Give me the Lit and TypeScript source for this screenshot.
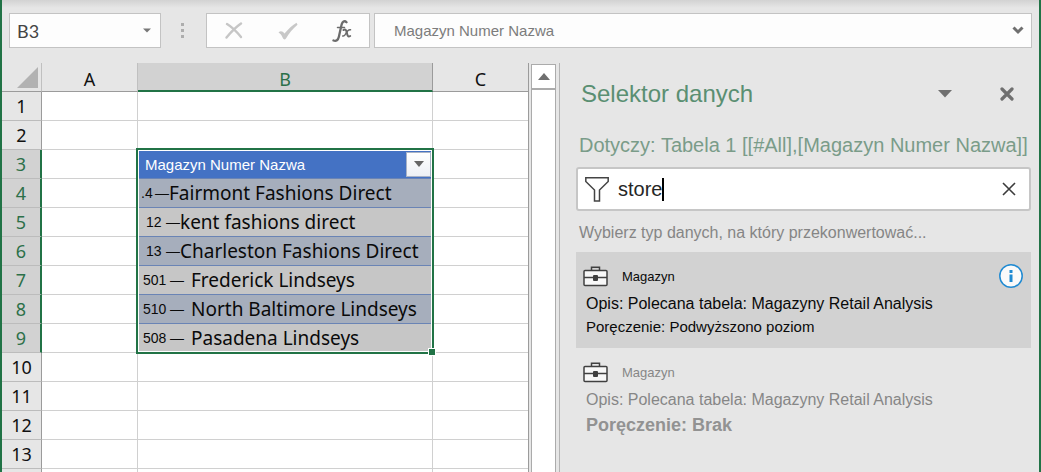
import { LitElement, html, css, svg, nothing } from "lit";
import { customElement, state } from "lit/decorators.js";

interface Store {
  num: string;
  size: string;
  name: string;
}

const STORES: Record<number, Store> = {
  4: { num: ".4", size: "short", name: "Fairmont Fashions Direct" },
  5: { num: "12", size: "mid", name: "kent fashions direct" },
  6: { num: "13", size: "mid", name: "Charleston Fashions Direct" },
  7: { num: "501", size: "long", name: "Frederick Lindseys" },
  8: { num: "510", size: "long", name: "North Baltimore Lindseys" },
  9: { num: "508", size: "long", name: "Pasadena Lindseys" },
};

const ROWS = Array.from({ length: 13 }, (_, i) => i + 1);

@customElement("formula-bar")
export class FormulaBar extends LitElement {
  static styles = css`
    :host {
      display: flex;
      padding: 13px 7px 15px;
      background: linear-gradient(#d2d2d2, #e6e6e6 8px);
      font-family: "Liberation Sans", Arial, sans-serif;
    }
    .box {
      display: flex;
      align-items: center;
      box-sizing: border-box;
      height: 35px;
      background: #fdfdfd;
      border: 1px solid #c3c3c3;
    }
    .name {
      width: 152px;
    }
    .tools {
      width: 164px;
      justify-content: space-between;
      padding: 0 14px;
      margin-right: 4px;
    }
    .formula {
      flex: 1;
      min-width: 0;
    }
    input {
      flex: 1;
      min-width: 0;
      border: 0;
      outline: 0;
      padding: 0;
      background: none;
    }
    .name input {
      padding-left: 7px;
      font: 18px "Lato", sans-serif;
      color: #444;
    }
    .formula input {
      padding-left: 19px;
      font: 15px "Liberation Sans", Arial, sans-serif;
      color: #7c7c7c;
    }
    button {
      display: flex;
      align-items: center;
      justify-content: center;
      border: 0;
      padding: 0;
      background: none;
    }
    .drop {
      width: 26px;
      height: 32px;
    }
    .tool {
      width: 26px;
      height: 32px;
    }
    .dots {
      display: flex;
      flex-direction: column;
      justify-content: center;
      gap: 3px;
      width: 3px;
      margin: 0 22px 0 20px;
    }
    .dots i {
      height: 3px;
      background: #adadad;
    }
    svg {
      display: block;
    }
  `;

  render() {
    return html`
      <div class="box name">
        <input aria-label="Pole nazwy" value="B3" />
        <button class="drop" aria-label="Lista nazw">
          <svg width="8" height="5"><path d="M0 .5h8L4 4.5z" fill="#777" /></svg>
        </button>
      </div>
      <div class="dots"><i></i><i></i><i></i></div>
      <div class="box tools">
        <button class="tool" aria-label="Anuluj">
          <svg width="18" height="17" viewBox="0 0 18 17" fill="none" stroke="#c6c6c6" stroke-linecap="round">
            <path d="M2 2C7 5 12 10 16 15" stroke-width="2.4" />
            <path d="M16 1.500C11 5 6 10 1.500 15.500" stroke-width="2.400" />
          </svg>
        </button>
        <button class="tool" aria-label="Wpisz">
          <svg width="20" height="18" viewBox="0 0 20 18">
            <path d="M.5 10.500c2-2.200 4-1.500 6 1C10 7.500 14 3.500 18.500.8l1 2C14.500 7 11 11.500 8 16.500 6.800 18 5.500 17.500 4.800 16 3.500 13 2.500 11.800.5 10.500z" fill="#c8c8c8" />
          </svg>
        </button>
        <button class="tool" aria-label="Wstaw funkcję">
          <svg width="20" height="22" viewBox="0 0 20 22" fill="none" stroke="#6b6b6b" stroke-linecap="round">
            <path d="M14.500 2.200C12.500.2 10.300 1.600 9.500 5L6.800 17c-.7 3-2.500 4.500-5.300 3.500" stroke-width="2.300" />
            <path d="M5.500 7.500h7" stroke-width="1.500" />
            <path d="M11.500 10c2.200-1 2.800 0 3.300 2.500s1 5 3.400 3.500" stroke-width="2" />
            <path d="M18.500 9.800c-2-.5-3.200 1-4.200 3-1 2.200-1.800 3.500-3.600 3.200" stroke-width="1.500" />
          </svg>
        </button>
      </div>
      <div class="box formula">
        <input aria-label="Pasek formuły" value="Magazyn Numer Nazwa" />
        <button class="drop" aria-label="Rozwiń pasek formuły">
          <svg width="12" height="9" viewBox="0 0 12 9"><path d="M1.500 1.500L6 6l4.500-4.500" fill="none" stroke="#6f6f6f" stroke-width="3" /></svg>
        </button>
      </div>
    `;
  }
}

@customElement("sheet-grid")
export class SheetGrid extends LitElement {
  static styles = css`
    :host {
      --row: 29px;
      --accent: #217346;
      display: flex;
      min-width: 0;
      min-height: 0;
      overflow: hidden;
      font-family: "Liberation Sans", Arial, sans-serif;
    }
    .view {
      flex: 1;
      min-width: 0;
      overflow: hidden;
      border-right: 1px solid #9b9b9b;
    }
    table {
      width: 100%;
      table-layout: fixed;
      border-collapse: separate;
      border-spacing: 0;
      background: #fff;
    }
    .c-head { width: 40px; }
    .c-a { width: 96px; }
    .c-b { width: 295px; }
    th, td {
      box-sizing: border-box;
      height: var(--row);
      padding: 0;
      border-right: 1px solid #d0d0d0;
      border-bottom: 1px solid #d0d0d0;
    }
    th {
      font: 18px/22px "Noto Sans", sans-serif;
      color: #111;
      background: #e6e6e6;
    }
    thead th {
      vertical-align: bottom;
      padding-bottom: 1px;
      border-right-color: #c0c0c0;
      border-bottom-color: #9b9b9b;
    }
    tbody th {
      border-right-color: #9b9b9b;
      border-bottom-color: #bcbcbc;
    }
    thead .on {
      padding-bottom: 0;
      background: #d2d2d2;
      color: #2c7049;
      border-right-color: #9b9b9b;
      border-bottom: 2px solid var(--accent);
    }
    tbody .on {
      background: #d2d2d2;
      color: #2c7049;
      border-right: 2px solid var(--accent);
    }
    tr > :last-child {
      border-right: 0;
    }
    .corner svg {
      display: block;
      margin: 0 3px 2px auto;
    }
    .title {
      position: relative;
      background: #4472c4;
      border-bottom-color: #6a84b5;
    }
    .field {
      display: flex;
      align-items: center;
      justify-content: space-between;
      padding: 0 1px 0 7px;
      font-size: 15px;
      color: #fff;
    }
    .field button {
      display: flex;
      align-items: center;
      justify-content: center;
      width: 25px;
      height: 25px;
      padding: 0;
      border: 1px solid #a9b3c6;
      background: linear-gradient(#fff, #edf0f5);
    }
    .range {
      position: absolute;
      z-index: 1;
      box-sizing: border-box;
      top: -2px;
      left: -2px;
      right: -2px;
      height: calc(var(--row) * 7 + 3px);
      border: 2px solid var(--accent);
      box-shadow: inset 0 0 0 1px #fff;
      pointer-events: none;
    }
    .handle {
      position: absolute;
      right: -4px;
      bottom: -4px;
      width: 6px;
      height: 6px;
      background: var(--accent);
      border: 1px solid #fff;
    }
    .data {
      background: #c6c6c6;
      border-bottom-color: #6a84b5;
    }
    .band {
      background: #a6aebc;
    }
    .store {
      display: flex;
      align-items: center;
      padding-left: 3px;
      white-space: nowrap;
      color: #0a0a0a;
    }
    .prefix {
      display: flex;
      box-sizing: border-box;
      justify-content: space-between;
      font-size: 14px;
    }
    .short { width: 28px; }
    .mid { width: 39px; padding-left: 5px; }
    .long { width: 50px; padding: 0 7px 0 2px; }
    .text {
      font: 19px/24px "Noto Sans", sans-serif;
    }
    .scroll {
      display: flex;
      flex-direction: column;
      box-sizing: border-box;
      width: 25px;
      margin: 1px 3px 0 2px;
      border: 1px solid #ababab;
      border-bottom: 0;
      background: #fff;
    }
    .scroll button {
      display: flex;
      align-items: center;
      justify-content: center;
      height: 25px;
      padding: 0;
      border: 0;
      border-bottom: 2px solid #ababab;
      background: #fff;
    }
  `;

  private cell(row: number) {
    if (row === 3) {
      return html`<td class="title">
        <div class="field">
          <span>Magazyn Numer Nazwa</span>
          <button aria-label="Filtruj"><svg width="10" height="6"><path d="M0 0h10L5 6z" fill="#666" /></svg></button>
        </div>
        <div class="range"><div class="handle"></div></div>
      </td>`;
    }
    const store = STORES[row];
    if (!store) return html`<td></td>`;
    return html`<td class="data ${row % 2 === 0 ? "band" : ""}">
      <div class="store">
        <span class="prefix ${store.size}"><span>${store.num}</span><span>—</span></span>
        <span class="text">${store.name}</span>
      </div>
    </td>`;
  }

  render() {
    return html`
      <div class="view">
        <table>
          <colgroup><col class="c-head" /><col class="c-a" /><col class="c-b" /><col /></colgroup>
          <thead>
            <tr>
              <th class="corner" aria-label="Zaznacz wszystko"><svg width="21" height="21"><path d="M21 0v21H0z" fill="#b2b2b2" /></svg></th>
              <th scope="col">A</th>
              <th scope="col" class="on">B</th>
              <th scope="col">C</th>
            </tr>
          </thead>
          <tbody>
            ${ROWS.map(
              (r) => html`<tr>
                <th scope="row" class=${r >= 3 && r <= 9 ? "on" : ""}>${r}</th>
                <td></td>
                ${this.cell(r)}
                <td></td>
              </tr>`
            )}
            <tr><th></th><td></td><td></td><td></td></tr>
          </tbody>
        </table>
      </div>
      <div class="scroll">
        <button aria-label="Przewiń w górę"><svg width="12" height="7"><path d="M6 0l6 7H0z" fill="#6f6f6f" /></svg></button>
      </div>
    `;
  }
}

const briefcase = svg`
  <rect x="1" y="4.500" width="23" height="15" rx="1" fill="#f8f8f8" stroke="#404040" stroke-width="1.500" />
  <path d="M8.500 4V1.200h8V4" fill="none" stroke="#404040" stroke-width="1.500" />
  <path d="M1 11.500h23" stroke="#404040" stroke-width="1.500" />
  <rect x="10" y="9" width="5" height="6" rx="1" fill="#404040" />
`;

@customElement("data-selector")
export class DataSelector extends LitElement {
  @state() private items = [
    { name: "Magazyn", desc: "Opis: Polecana tabela: Magazyny Retail Analysis", trust: "Poręczenie: Podwyższono poziom", active: true },
    { name: "Magazyn", desc: "Opis: Polecana tabela: Magazyny Retail Analysis", trust: "Poręczenie: Brak", active: false },
  ];

  static styles = css`
    :host {
      display: block;
      box-sizing: border-box;
      padding: 16px 8px 0 16px;
      border-left: 1px solid #b4b4b4;
      font-family: "Liberation Sans", Arial, sans-serif;
    }
    header {
      display: flex;
      align-items: center;
      padding: 0 12px 0 5px;
    }
    h2 {
      flex: 1;
      margin: 0;
      font-size: 24px;
      line-height: 30px;
      font-weight: 400;
      color: #5a8f72;
    }
    button {
      display: flex;
      align-items: center;
      justify-content: center;
      width: 24px;
      height: 24px;
      padding: 0;
      border: 0;
      background: none;
    }
    header button + button {
      margin-left: 38px;
    }
    .scope {
      margin: 24px 0 10px;
      padding-left: 3px;
      font-size: 20px;
      line-height: 24px;
      white-space: nowrap;
      color: #7a9c89;
    }
    .search {
      display: flex;
      align-items: center;
      box-sizing: border-box;
      height: 44px;
      padding: 0 8px 0 7px;
      border: 2px solid #c6c6c6;
      border-radius: 3px;
      background: #fff;
    }
    .entry {
      flex: 1;
      display: flex;
      align-items: center;
      min-width: 0;
      padding-left: 9px;
    }
    input {
      field-sizing: content;
      padding: 0;
      border: 0;
      outline: 0;
      font: 20px/24px "Liberation Sans", Arial, sans-serif;
      color: #262626;
    }
    .caret {
      width: 2px;
      height: 23px;
      background: #000;
    }
    .hint {
      margin: 12px 0 9px;
      padding-left: 3px;
      font-size: 16px;
      line-height: 20px;
      color: #858585;
    }
    ul {
      margin: 0;
      padding: 0;
      list-style: none;
    }
    li {
      box-sizing: border-box;
      height: 96px;
      padding: 12px 8px 8px 7px;
      color: #868686;
    }
    .active {
      background: #d2d2d2;
      color: #0a0a0a;
    }
    .top {
      display: flex;
      align-items: center;
      height: 24px;
      gap: 14px;
      font-size: 13px;
    }
    .top span {
      flex: 1;
    }
    .desc {
      padding: 6px 0 2px 3px;
      font-size: 16px;
      line-height: 20px;
    }
    .trust {
      padding-left: 3px;
      font-size: 15px;
      line-height: 22px;
    }
    .none {
      font-size: 18px;
      line-height: 26px;
      font-weight: 700;
      color: #929292;
    }
  `;

  render() {
    return html`
      <header>
        <h2>Selektor danych</h2>
        <button aria-label="Opcje okienka"><svg width="14" height="8"><path d="M0 0h14L7 7.500z" fill="#6f6f6f" /></svg></button>
        <button aria-label="Zamknij"><svg width="14" height="14"><path d="M2 2l10 10M12 2L2 12" stroke="#6f6f6f" stroke-width="3.200" stroke-linecap="round" /></svg></button>
      </header>
      <p class="scope">Dotyczy: Tabela 1 [[#All],[Magazyn Numer Nazwa]]</p>
      <div class="search">
        <svg width="24" height="25" viewBox="0 0 24 25"><path d="M.8.8h22.400v3.700L14.500 13v11h-5V13L.8 4.500z" fill="#fff" stroke="#444" stroke-width="1.500" /></svg>
        <div class="entry"><input aria-label="Szukaj typu danych" value="store" /><span class="caret"></span></div>
        <button aria-label="Wyczyść"><svg width="14" height="14"><path d="M1 1l12 12M13 1L1 13" stroke="#3c3c3c" stroke-width="1.600" /></svg></button>
      </div>
      <p class="hint">Wybierz typ danych, na który przekonwertować...</p>
      <ul>
        ${this.items.map(
          (it) => html`<li class=${it.active ? "active" : ""}>
            <div class="top">
              <svg width="25" height="21" viewBox="0 0 25 21">${briefcase}</svg>
              <span>${it.name}</span>
              ${it.active
                ? html`<button aria-label="Informacje">
                    <svg width="24" height="24"><circle cx="12" cy="12" r="11.200" fill="#fafafa" stroke="#1f8ad2" stroke-width="1.500" /><path d="M10.500 6h3v3h-3zM10.500 10.500h3V18h-3z" fill="#1f8ad2" /></svg>
                  </button>`
                : nothing}
            </div>
            <div class="desc">${it.desc}</div>
            <div class="trust ${it.active ? "" : "none"}">${it.trust}</div>
          </li>`
        )}
      </ul>
    `;
  }
}

@customElement("app-root")
export class AppRoot extends LitElement {
  static styles = css`
    :host {
      display: flex;
      flex-direction: column;
      box-sizing: border-box;
      height: 100vh;
      overflow: hidden;
      border: solid #217346;
      border-width: 0 2px;
      background: #e6e6e6;
    }
    .body {
      flex: 1;
      min-height: 0;
      display: grid;
      grid-template-columns: minmax(0, 1fr) 480px;
      grid-template-rows: minmax(0, 1fr);
    }
  `;

  render() {
    return html`
      <formula-bar></formula-bar>
      <div class="body">
        <sheet-grid></sheet-grid>
        <data-selector></data-selector>
      </div>
    `;
  }
}
